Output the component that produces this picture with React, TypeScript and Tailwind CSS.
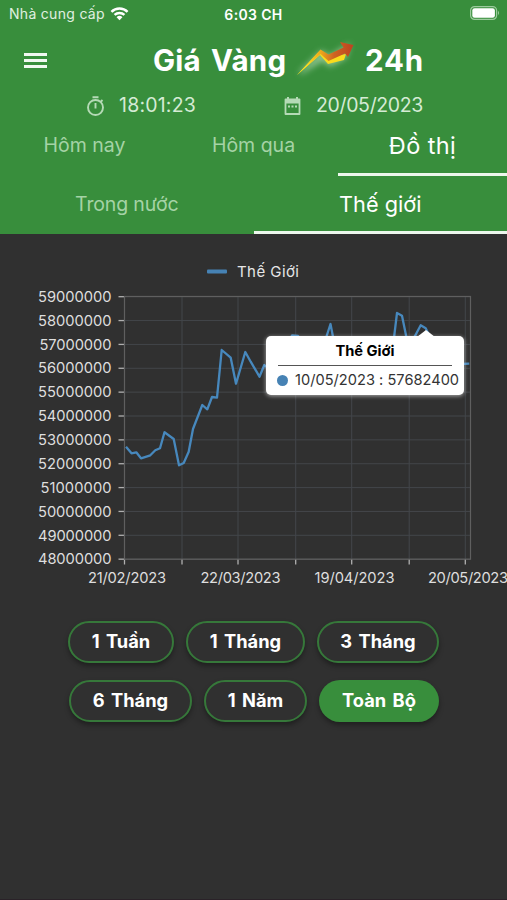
import { Fragment } from 'react';

const yLabels = [59, 58, 57, 56, 55, 54, 53, 52, 51, 50, 49, 48];
const xTicks = [124.5, 182, 238, 295.7, 351.7, 409.2, 465.3];

const xLabels = [
  { x: 127, text: '21/02/2023' },
  { x: 240.5, text: '22/03/2023' },
  { x: 354.5, text: '19/04/2023' },
  { x: 468, text: '20/05/2023' },
];

const line =
  '126,446.7 131.5,453.3 136.3,452.3 141,458.3 150.3,455.3 155.3,450.3 160,448.3 164.5,432.3 173.7,439 179,465.3 183.7,463 188.7,451.7 193,429 202.3,405 207.3,409.3 212,397 217,397.7 221.7,350 230.7,357.7 236,383.7 245.3,352 250.7,361.7 259.5,376.7 264.3,365 270,370 280,355 292,335.5 298,336 304,345 318,352 326,338 330.5,324 334,342 350,360 370,352 385,362 393,346 397,313 402,315.7 408,345 415,336 420.7,325.3 425.7,328.3 434,345 450,358 460,364 469.3,363.7';

function Chart() {
  return (
    <svg className="block h-[346px] w-full font-['Inter']" viewBox="0 254 507 346">
      <rect x="207" y="269.5" width="20" height="4" rx="1" fill="#4682b4" />
      <text x="237" y="276.5" fontSize="15" fill="#e6e6e6" textLength="62">
        Thế Giới
      </text>

      {yLabels.map((n, i) => {
        const y = 296.7 + i * 23.86;
        return (
          <Fragment key={n}>
            <line x1="124.5" x2="470.5" y1={y} y2={y} stroke="#43464a" />
            <line x1="118.5" x2="124.5" y1={y} y2={y} stroke="#b0b0b0" strokeWidth="1.3" />
            <text x="111.5" y={y + 5.2} fontSize="14.7" textAnchor="end" fill="#dedede" textLength={n === 51 ? 71 : n === 57 ? 72 : 73.5}>
              {n}000000
            </text>
          </Fragment>
        );
      })}

      {xTicks.map((x) => (
        <Fragment key={x}>
          <line x1={x} x2={x} y1="296.5" y2="559" stroke="#43464a" />
          <line x1={x} x2={x} y1="559" y2="564.5" stroke="#b0b0b0" strokeWidth="1.3" />
        </Fragment>
      ))}

      <rect x="124.5" y="296.5" width="346" height="262.7" fill="none" stroke="#5f5f5f" strokeWidth="1.2" />

      {xLabels.map((l) => (
        <text key={l.text} x={l.x} y="582.5" fontSize="14.7" textAnchor="middle" fill="#dedede" textLength={l.x === 127 ? 78 : 80}>
          {l.text}
        </text>
      ))}

      <polyline points={line} fill="none" stroke="#4788bd" strokeWidth="2.3" strokeLinejoin="round" />
    </svg>
  );
}

function Tooltip() {
  return (
    <div className="absolute left-[266px] top-[102px] h-[59px] w-[198px] rounded-[5px] bg-white shadow-[0_1px_4px_rgba(255,255,255,0.6)]">
      <div className="absolute -top-[6px] left-[151px] h-0 w-0 border-x-[9px] border-b-[7px] border-x-transparent border-b-white" />
      <p className="pt-[5px] text-center text-[14.7px] leading-[20px] font-bold text-black">Thế Giới</p>
      <div className="mx-3 mt-[4px] h-px bg-[#555]" />
      <div className="mt-[4px] flex items-center pl-[11px]">
        <span className="h-[11px] w-[11px] rounded-full bg-[#4682b4]" />
        <span className="ml-[7px] text-[14.6px] leading-[20px] tracking-[0.02px] whitespace-nowrap text-[#333]">10/05/2023 : 57682400</span>
      </div>
    </div>
  );
}

function TrendLogo() {
  return (
    <svg className="h-[44px] w-[66px]" viewBox="0 0 66 44">
      <defs>
        <linearGradient id="arrow" x1="8" y1="0" x2="60" y2="0" gradientUnits="userSpaceOnUse">
          <stop offset="0.1" stopColor="#fbe11e" />
          <stop offset="0.4" stopColor="#eda81c" />
          <stop offset="0.65" stopColor="#cf6522" />
          <stop offset="1" stopColor="#bd4520" />
        </linearGradient>
        <filter id="glow" x="-30%" y="-40%" width="160%" height="180%">
          <feGaussianBlur stdDeviation="3" />
        </filter>
      </defs>
      <path d="M8 35 L30 14 L37 20 L56 8 L53 19 L38 27 L31 21 Z" fill="#d9f2d5" stroke="#d9f2d5" strokeWidth="3" opacity="0.55" filter="url(#glow)" />
      <path d="M5 37 L28 17 L36 26 L52 22 L54 16 L37 19 L28 13 Z" fill="#fadb1c" />
      <path d="M5 37 L28.500 11.500 L36.500 16.500 L51.500 9.500 L48 4 L61.500 7 L56 19 L53 15.500 L36.500 23 L28.500 16 Z" fill="url(#arrow)" />
    </svg>
  );
}

const ranges = [
  [
    { label: '1 Tuần', width: 'w-[106px]' },
    { label: '1 Tháng', width: 'w-[119px]' },
    { label: '3 Tháng', width: 'w-[122px]' },
  ],
  [
    { label: '6 Tháng', width: 'w-[123px]' },
    { label: '1 Năm', width: 'w-[103px]' },
    { label: 'Toàn Bộ', width: 'w-[120px]', active: true },
  ],
];

export default function App() {
  return (
    <div className="relative h-[900px] w-[507px] overflow-hidden border-b border-[#2a2228] bg-[#303030] font-['Inter',sans-serif] text-white">
      <header className="h-[234px] bg-[#388e3c]">
        {/* Status bar */}
        <div className="grid h-[28px] grid-cols-3 items-center">
          <div className="flex items-center pl-[9px]">
            <span className="text-[14px] leading-5 tracking-[0.3px] whitespace-nowrap text-[#e0f0e0]">Nhà cung cấp</span>
            <svg className="ml-[5px] h-[15px] w-[19px] -translate-y-px" viewBox="0 0 20 15" fill="none" stroke="#fff" strokeWidth="2.6">
              <path d="M1.500 5.800 A12.200 12.200 0 0 1 18.500 5.800" />
              <path d="M4.800 9 A7.600 7.600 0 0 1 15.200 9" />
              <path d="M10 14.500 L6.900 11.400 A4.400 4.400 0 0 1 13.100 11.400 Z" fill="#fff" stroke="none" />
            </svg>
          </div>
          <span className="text-center text-[14px] font-semibold tracking-[0.35px]">6:03 CH</span>
          <div className="flex justify-end pr-[7px]">
            <svg className="h-[14px] w-[30px] -translate-y-px" viewBox="0 0 30 14">
              <rect x="0.600" y="0.600" width="26" height="12.800" rx="4" fill="none" stroke="#9ccb9d" strokeWidth="1.200" />
              <rect x="2.300" y="2.300" width="22.600" height="9.400" rx="2.300" fill="#fff" />
              <path d="M28 4.800 Q30 7 28 9.200 Z" fill="#9ccb9d" />
            </svg>
          </div>
        </div>

        {/* Title */}
        <div className="flex h-[64px] items-center">
          <button className="ml-[24px] flex w-[23px] flex-col gap-[3px]">
            <span className="h-[3px] bg-[#f1f8f1]" />
            <span className="h-[3px] bg-[#f1f8f1]" />
            <span className="h-[3px] bg-[#f1f8f1]" />
          </button>
          <h1 className="ml-[106px] flex items-center text-[29.500px] font-bold">
            <span className="w-[139px] tracking-[0.2px] [word-spacing:3px] whitespace-nowrap">Giá Vàng</span>
            <TrendLogo />
            <span className="ml-[7px] tracking-[0.8px]">24h</span>
          </h1>
        </div>

        {/* Clock and date */}
        <div className="flex h-[27px] items-center text-[19.500px] text-[#d5ebd5]">
          <svg className="ml-[86px] h-[20px] w-[19px]" viewBox="0 0 19 20" fill="none" stroke="#b5dab6" strokeWidth="1.900">
            <circle cx="9.500" cy="11.500" r="7.500" />
            <path d="M6.500 1.200 H12.500 M9.500 7 V12.500 M14.500 6 L16.500 4" />
          </svg>
          <span className="ml-[14px] w-[165px] tracking-[0.2px]">18:01:23</span>
          <svg className="h-[20px] w-[17px]" viewBox="0 0 17 20">
            <path d="M1.500 3.500 H15.500 V18 H1.500 Z" fill="none" stroke="#b5dab6" strokeWidth="1.800" strokeLinejoin="round" />
            <path d="M1 3 H16 V7.500 H1 Z M3 1 H5 V4 H3 Z M12 1 H14 V4 H12 Z" fill="#b5dab6" />
            <path d="M4 9.500 H6 V11.500 H4 Z M7.500 9.500 H9.500 V11.500 H7.500 Z M11 9.500 H13 V11.500 H11 Z" fill="#b5dab6" />
          </svg>
          <span className="ml-[15px] tracking-[-0.35px]">20/05/2023</span>
        </div>

        {/* Tabs */}
        <nav className="grid h-[57px] grid-cols-3 text-center text-[19.500px] text-[#a5d3a6]">
          <span className="pt-[12px]">Hôm nay</span>
          <span className="pt-[12px]">Hôm qua</span>
          <span className="border-b-[3px] border-[#edf7ed] pt-[9px] text-[23.500px] tracking-[0.4px] text-white">Đồ thị</span>
        </nav>
        <nav className="grid h-[58px] grid-cols-2 text-center text-[19.500px] text-[#a5d3a6]">
          <span className="pt-[14px] tracking-[-0.15px]">Trong nước</span>
          <span className="border-b-[3px] border-[#edf7ed] pt-[12px] text-[21.700px] text-white">Thế giới</span>
        </nav>
      </header>

      <section className="relative pt-[20px]">
        <Chart />
        <Tooltip />
      </section>

      <div className="flex flex-col gap-[17px] pt-[21px]">
        {ranges.map((row, i) => (
          <div key={i} className={i === 0 ? 'flex gap-[12px] pl-[68px]' : 'flex gap-[12px] pl-[69px]'}>
            {row.map((r) => (
              <button
                key={r.label}
                className={`h-[42px] rounded-full text-[18.300px] font-bold [word-spacing:2px] whitespace-nowrap shadow-[0_3px_5px_rgba(0,0,0,0.35)] ${r.width} ${r.active ? 'bg-[#388e3c]' : 'border-2 border-[#36783a] bg-[#303030]'}`}
              >
                {r.label}
              </button>
            ))}
          </div>
        ))}
      </div>
    </div>
  );
}
